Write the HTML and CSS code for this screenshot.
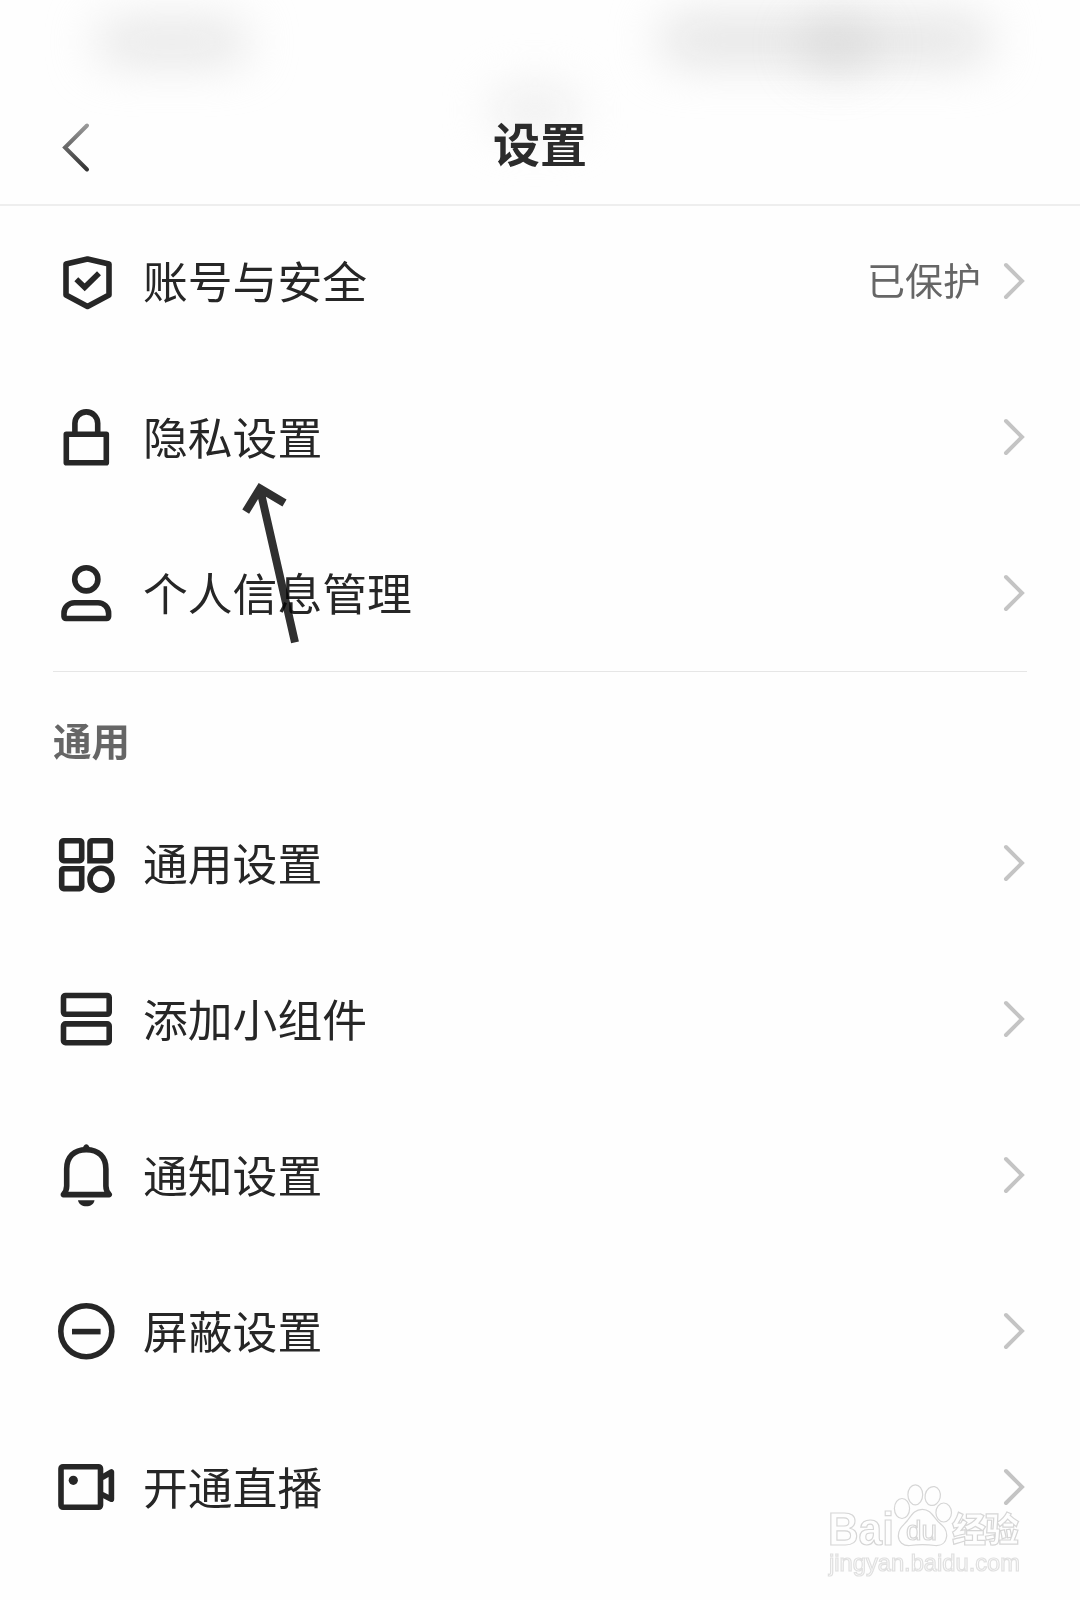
FILE: index.html
```html
<!DOCTYPE html>
<html lang="zh-CN">
<head>
    <meta charset="UTF-8">
    <meta name="viewport" content="width=device-width, initial-scale=1.0">
    <title>设置</title>
    <link rel="stylesheet" href="styles.css">
</head>
<body>
    <div class="page">
        <div class="smudge smudge-left"></div>
        <div class="smudge smudge-right"></div>
        <div class="smudge smudge-spot"></div>
        <div class="smudge smudge-title"></div>

        <header class="header">
            <svg class="back" viewBox="0 0 32 52">
                <defs>
                    <linearGradient id="fade" x1="0" y1="0" x2="0" y2="1">
                        <stop offset="0" stop-color="#999"/>
                        <stop offset="0.5" stop-color="#666"/>
                        <stop offset="1" stop-color="#333"/>
                    </linearGradient>
                </defs>
                <path d="M27 4.500 5 26.500 27 48.500" stroke="url(#fade)"/>
            </svg>
            <h1>设置</h1>
        </header>

        <main>
            <div class="group">
                <a class="row">
                    <svg class="icon" viewBox="0 0 60 60">
                        <path d="M31.500 8 53 13V44L31.500 55.500 10 44V13Z"/>
                        <path d="M20.300 28.300 28.700 36.300 43 22.200" stroke-linejoin="miter"/>
                    </svg>
                    <span class="label">账号与安全</span>
                    <span class="value">已保护</span>
                    <svg class="chevron" viewBox="0 0 24 40"><path d="M4 4 20 20 4 36"/></svg>
                </a>
                <a class="row">
                    <svg class="icon" viewBox="0 0 60 60">
                        <rect x="10.300" y="27.300" width="40" height="28.400"/>
                        <path d="M18.900 27V16.300a11.400 11.400 0 0 1 22.800 0V27"/>
                    </svg>
                    <span class="label">隐私设置</span>
                    <svg class="chevron" viewBox="0 0 24 40"><path d="M4 4 20 20 4 36"/></svg>
                </a>
                <a class="row">
                    <svg class="icon" viewBox="0 0 60 60">
                        <circle cx="30.300" cy="16.300" r="11.600"/>
                        <path d="M18.500 39.700H42A10.600 10.600 0 0 1 52.600 50.300V53.500a2 2 0 0 1-2 2H10a2 2 0 0 1-2-2V50.300A10.600 10.600 0 0 1 18.500 39.700Z"/>
                    </svg>
                    <span class="label">个人信息管理</span>
                    <svg class="chevron" viewBox="0 0 24 40"><path d="M4 4 20 20 4 36"/></svg>
                </a>
            </div>

            <h2>通用</h2>
            <div class="group">
                <a class="row">
                    <svg class="icon" viewBox="0 0 60 60">
                        <rect x="5.700" y="7.700" width="20" height="20" rx="2"/>
                        <path d="M34 27.700V9.700a2 2 0 0 1 2-2H52.300a2 2 0 0 1 2 2V25.700a2 2 0 0 1-2 2Z" stroke-linejoin="miter"/>
                        <path d="M25.700 35.700V53.600a2 2 0 0 1-2 2H7.700a2 2 0 0 1-2-2V37.700a2 2 0 0 1 2-2Z" stroke-linejoin="miter"/>
                        <circle cx="45" cy="46.300" r="11"/>
                    </svg>
                    <span class="label">通用设置</span>
                    <svg class="chevron" viewBox="0 0 24 40"><path d="M4 4 20 20 4 36"/></svg>
                </a>
                <a class="row">
                    <svg class="icon" viewBox="0 0 60 60">
                        <rect x="7.500" y="6.500" width="45.700" height="18.800" rx="2"/>
                        <rect x="7.500" y="34.900" width="45.700" height="18.800" rx="2"/>
                    </svg>
                    <span class="label">添加小组件</span>
                    <svg class="chevron" viewBox="0 0 24 40"><path d="M4 4 20 20 4 36"/></svg>
                </a>
                <a class="row">
                    <svg class="icon" viewBox="0 0 60 60">
                        <path d="M10.700 24C10.700 12 18 4.700 30.300 4.700S49.900 12 49.900 24V41C49.900 44.500 51 47 53.200 49.600H7.400C9.600 47 10.700 44.500 10.700 41Z"/>
                        <path class="solid" d="M24.500 5.500C27 3.500 27.500-.8 30.300-.8S33.600 3.500 36.100 5.500Z"/>
                        <path class="solid" d="M22 55.200H38.500C37.800 59.500 34.500 61.200 30.300 61.200S22.800 59.500 22 55.200Z"/>
                    </svg>
                    <span class="label">通知设置</span>
                    <svg class="chevron" viewBox="0 0 24 40"><path d="M4 4 20 20 4 36"/></svg>
                </a>
                <a class="row">
                    <svg class="icon" viewBox="0 0 60 60">
                        <circle cx="30.300" cy="30.200" r="25.500"/>
                        <path d="M16 30.600H44.600"/>
                    </svg>
                    <span class="label">屏蔽设置</span>
                    <svg class="chevron" viewBox="0 0 24 40"><path d="M4 4 20 20 4 36"/></svg>
                </a>
                <a class="row">
                    <svg class="icon" viewBox="0 0 60 60">
                        <rect x="5" y="9.700" width="39.500" height="40.600" rx="2"/>
                        <circle class="solid" cx="17.300" cy="23.300" r="4.600"/>
                        <path d="M46 20.500 55.400 15V42.200L46 37.500"/>
                    </svg>
                    <span class="label">开通直播</span>
                    <svg class="chevron" viewBox="0 0 24 40"><path d="M4 4 20 20 4 36"/></svg>
                </a>
            </div>
        </main>

        <!-- pointer to the privacy row -->
        <svg class="pointer" viewBox="0 0 60 170">
            <path d="M10.700 36.700 25 13.500 49.500 28M25 14 60 167.300"/>
        </svg>

        <svg class="watermark" viewBox="0 0 210 105">
            <ellipse cx="82" cy="28.500" rx="7.600" ry="10"/>
            <ellipse cx="95.300" cy="14.800" rx="7.400" ry="10"/>
            <ellipse cx="112.700" cy="16" rx="7.600" ry="9.500" transform="rotate(12 112.700 16)"/>
            <ellipse cx="123.700" cy="32.500" rx="7.800" ry="9.500"/>
            <path d="M102.300 29.300C110 29.300 113 36 118 41.500C123 46 127 49 126.700 56C126 63 121 66 115 65.500C108 64.500 97 64.500 90 65.500C83 66 78.500 62 78.300 56C78.500 48 83 46 87.500 40.500C92 34.500 95 29.300 102.300 29.300Z"/>
            <text class="wm-bold" x="8" y="65" font-size="46" textLength="66" lengthAdjust="spacingAndGlyphs">Bai</text>
            <text class="wm-du" x="86" y="60" font-size="28" textLength="31" lengthAdjust="spacingAndGlyphs">du</text>
            <text class="wm-cn" x="132" y="62" font-size="34" textLength="67">经验</text>
            <text class="wm-url" x="9" y="90.700" font-size="24" textLength="191" lengthAdjust="spacingAndGlyphs">jingyan.baidu.com</text>
        </svg>
    </div>
</body>
</html>
```

FILE: styles.css
```css
* {
    box-sizing: border-box;
}

body {
    margin: 0;
    background: #fefefe;
    color: #262626;
    font-family: "Noto Sans CJK SC", "Liberation Sans", sans-serif;
}

.page {
    position: relative;
    width: 1080px;
    height: 1600px;
    overflow: hidden;
}

.header {
    position: relative;
    height: 206px;
    padding: 80px 58px 0 60px;
    display: grid;
    grid-template-columns: 32px 1fr 34px;
    align-items: center;
    border-bottom: 2px solid #eee;
}

.back {
    width: 32px;
    height: 52px;
    margin-top: 10px;
    fill: none;
    stroke-width: 4;
    stroke-linecap: round;
}

h1 {
    margin: 0;
    font-size: 47px;
    line-height: 70px;
    font-weight: 700;
    text-align: center;
    color: #2b2b2b;
}

.group {
    display: flex;
    flex-direction: column;
    gap: 4px;
}

.header + main {
    margin-top: -1px;
}

.row {
    height: 152px;
    padding: 0 54px 0 56px;
    display: flex;
    align-items: center;
}

.icon {
    width: 60px;
    height: 60px;
    margin-right: 27px;
    overflow: visible;
    fill: none;
    stroke: #262626;
    stroke-width: 5.6;
    stroke-linejoin: round;
}

.icon .solid {
    fill: #262626;
    stroke: none;
}

.label {
    flex: 1;
    padding-bottom: 3px;
    font-size: 44.8px;
    line-height: 60px;
}

.value {
    margin-right: 21px;
    padding-bottom: 5px;
    font-size: 38px;
    line-height: 60px;
    color: #666;
}

.chevron {
    width: 24px;
    height: 40px;
    fill: none;
    stroke: #c4c4c4;
    stroke-width: 4;
    stroke-linecap: round;
}

h2 {
    margin: 2px 53px 0;
    padding-top: 37px;
    height: 116px;
    border-top: 1px solid #e6e6e6;
    font-size: 38.5px;
    line-height: 60px;
    font-weight: 700;
    color: #666;
}

.pointer {
    position: absolute;
    left: 235px;
    top: 475px;
    width: 60px;
    height: 170px;
    overflow: visible;
    fill: none;
    stroke: #303030;
    stroke-width: 8;
    mix-blend-mode: multiply;
}

.watermark {
    position: absolute;
    left: 820px;
    top: 1480px;
    width: 210px;
    height: 105px;
    overflow: visible;
    fill: #fefefe;
    stroke: #d6d6d6;
    stroke-width: 1.2;
}

.wm-bold {
    font-family: "Liberation Sans", sans-serif;
    font-weight: 700;
}

.wm-du {
    font-family: "Liberation Sans", sans-serif;
}

.wm-cn {
    font-weight: 900;
}

.wm-url {
    font-family: "Liberation Sans", sans-serif;
    stroke: #e0e0e0;
}

/* blurred status bar */
.smudge {
    position: absolute;
    border-radius: 50px;
}

.smudge-left {
    left: 97px;
    top: 24px;
    width: 150px;
    height: 36px;
    background: #e2e2e2;
    filter: blur(24px);
}

.smudge-right {
    left: 660px;
    top: 18px;
    width: 330px;
    height: 44px;
    background: #e2e2e2;
    filter: blur(24px);
}

.smudge-spot {
    left: 800px;
    top: 20px;
    width: 75px;
    height: 50px;
    background: #cfcfcf;
    opacity: 0.6;
    filter: blur(24px);
}

.smudge-title {
    left: 490px;
    top: 85px;
    width: 90px;
    height: 50px;
    background: #f0f0f0;
    filter: blur(22px);
}
```
